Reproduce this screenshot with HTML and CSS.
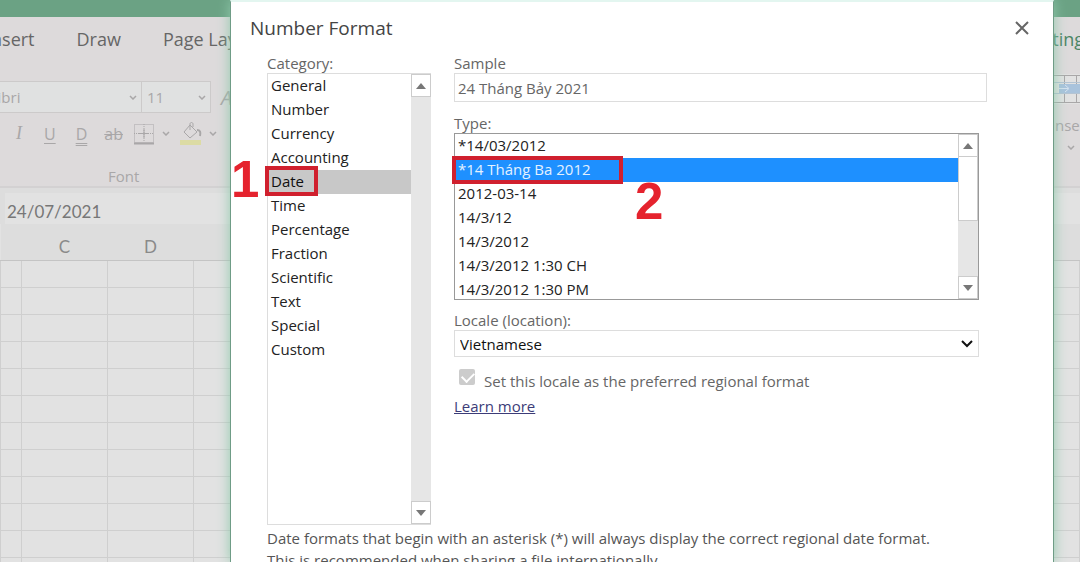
FILE: index.html
```html
<!DOCTYPE html>
<html lang="en">
<head>
    <meta charset="UTF-8">
    <title>Number Format</title>
    <meta name="viewport" content="width=device-width, initial-scale=1.0">
    <link rel="stylesheet" href="styles.css">
</head>
<body>
    <div class="workbook">
        <div class="titlebar"></div>

        <nav class="tabs">
            <button class="tab">Insert</button>
            <button class="tab">Draw</button>
            <button class="tab">Page Layout</button>
            <button class="tab mode">Editing</button>
        </nav>

        <div class="ribbon">
            <div class="group font-group">
                <div class="font-row">
                    <div class="picker font-name">
                        <select aria-label="Font"><option>Calibri</option></select>
                        <svg class="chevron" viewBox="0 0 8 5"><path d="M1 1l3 3 3-3"/></svg>
                    </div>
                    <div class="picker font-size">
                        <select aria-label="Font size"><option>11</option></select>
                        <svg class="chevron" viewBox="0 0 8 5"><path d="M1 1l3 3 3-3"/></svg>
                    </div>
                    <button class="tool grow">A</button>
                </div>
                <div class="tool-row">
                    <button class="tool italic">I</button>
                    <button class="tool underline">U</button>
                    <button class="tool double">D</button>
                    <button class="tool strike">ab</button>
                    <button class="tool with-menu" aria-label="Borders">
                        <svg width="22" height="22" viewBox="0 0 22 22">
                            <path d="M1.500 1.500h19v18h-19zM11 1v18M1 10.500h20" stroke-dasharray="1 1"/>
                            <path d="M11 6v9M6 10.500h10"/>
                            <path d="M1 20.500h20" stroke-width="2"/>
                        </svg>
                        <svg class="chevron" viewBox="0 0 8 5"><path d="M1 1l3 3 3-3"/></svg>
                    </button>
                    <button class="tool with-menu" aria-label="Fill color">
                        <svg width="22" height="24" viewBox="0 0 22 24">
                            <rect class="swatch" x="0" y="18" width="21" height="5"/>
                            <path d="M10 3l7 7-7 6-6-6zM10 8V2c0-2 3-2 3 0v3"/>
                            <path d="M17 8c3 0 4 2 3 6" stroke-width="2"/>
                        </svg>
                        <svg class="chevron" viewBox="0 0 8 5"><path d="M1 1l3 3 3-3"/></svg>
                    </button>
                </div>
                <span class="group-name">Font</span>
            </div>
            <button class="group cells-group">
                <svg width="50" height="31" viewBox="0 0 50 31">
                    <rect class="paper" x="0" y="0" width="50" height="30"/>
                    <path d="M0 1.500h50M0 28.500h50M18.500 1v28M30.500 1v28M42.500 1v28"/>
                    <rect class="cell" x="13" y="10" width="37" height="9"/>
                    <path class="edge" d="M0 8.500h50M0 19.500h50"/>
                    <path class="arrow" d="M13 14.500h9M19 11l4 3.500-4 3.500"/>
                </svg>
                <span>Insert</span>
                <svg class="chevron" viewBox="0 0 8 5"><path d="M1 1l3 3 3-3"/></svg>
            </button>
        </div>

        <div class="formula-bar">
            <input type="text" value="24/07/2021" aria-label="Formula bar">
        </div>

        <table class="sheet">
            <thead>
                <tr><th class="edge-col"></th><th>C</th><th>D</th><th class="rest"></th></tr>
            </thead>
            <tbody>
                <tr><td></td><td></td><td></td><td></td></tr>
                <tr><td></td><td></td><td></td><td></td></tr>
                <tr><td></td><td></td><td></td><td></td></tr>
                <tr><td></td><td></td><td></td><td></td></tr>
                <tr><td></td><td></td><td></td><td></td></tr>
                <tr><td></td><td></td><td></td><td></td></tr>
                <tr><td></td><td></td><td></td><td></td></tr>
                <tr><td></td><td></td><td></td><td></td></tr>
                <tr><td></td><td></td><td></td><td></td></tr>
                <tr><td></td><td></td><td></td><td></td></tr>
                <tr><td></td><td></td><td></td><td></td></tr>
                <tr><td></td><td></td><td></td><td></td></tr>
            </tbody>
        </table>
    </div>

    <div class="dialog" role="dialog" aria-labelledby="dialog-title">
        <header class="dialog-header">
            <h1 id="dialog-title">Number Format</h1>
            <button class="close" aria-label="Close">
                <svg width="14" height="14" viewBox="0 0 14 14"><path d="M1 1l12 12M13 1L1 13"/></svg>
            </button>
        </header>

        <div class="dialog-body">
            <div class="column">
                <label for="category">Category:</label>
                <div class="listbox category-box">
                    <select id="category" size="12">
                        <option>General</option>
                        <option>Number</option>
                        <option>Currency</option>
                        <option>Accounting</option>
                        <option selected>Date</option>
                        <option>Time</option>
                        <option>Percentage</option>
                        <option>Fraction</option>
                        <option>Scientific</option>
                        <option>Text</option>
                        <option>Special</option>
                        <option>Custom</option>
                    </select>
                    <div class="scrollbar">
                        <button class="arrow-btn" aria-label="Scroll up"><svg viewBox="0 0 10 6"><path d="M0 6l5-6 5 6z"/></svg></button>
                        <div class="track"></div>
                        <button class="arrow-btn" aria-label="Scroll down"><svg viewBox="0 0 10 6"><path d="M0 0l5 6 5-6z"/></svg></button>
                    </div>
                </div>
            </div>

            <div class="column options">
                <label for="sample">Sample</label>
                <input id="sample" class="sample" type="text" value="24 Tháng Bảy 2021" readonly>

                <label for="type">Type:</label>
                <div class="listbox type-box">
                    <select id="type" size="7">
                        <option>*14/03/2012</option>
                        <option selected>*14 Tháng Ba 2012</option>
                        <option>2012-03-14</option>
                        <option>14/3/12</option>
                        <option>14/3/2012</option>
                        <option>14/3/2012 1:30 CH</option>
                        <option>14/3/2012 1:30 PM</option>
                    </select>
                    <div class="scrollbar">
                        <button class="arrow-btn" aria-label="Scroll up"><svg viewBox="0 0 10 6"><path d="M0 6l5-6 5 6z"/></svg></button>
                        <div class="track"><div class="thumb"></div></div>
                        <button class="arrow-btn" aria-label="Scroll down"><svg viewBox="0 0 10 6"><path d="M0 0l5 6 5-6z"/></svg></button>
                    </div>
                </div>

                <label for="locale">Locale (location):</label>
                <div class="picker locale">
                    <select id="locale"><option>Vietnamese</option></select>
                    <svg class="chevron" viewBox="0 0 12 8"><path d="M1 1l5 5 5-5"/></svg>
                </div>

                <div class="preferred">
                    <input id="preferred" type="checkbox" checked disabled>
                    <label for="preferred">Set this locale as the preferred regional format</label>
                </div>
                <a class="learn" href="#">Learn more</a>
            </div>
        </div>

        <p class="note">Date formats that begin with an asterisk (*) will always display the correct regional date format.<br>This is recommended when sharing a file internationally.</p>

        <!-- step markers -->
        <div class="marker marker-date"></div>
        <div class="marker marker-type"></div>
        <span class="step step-one">1</span>
        <span class="step step-two">2</span>
    </div>
</body>
</html>
```
FILE: styles.css
```css
* {
    box-sizing: border-box;
}

body {
    margin: 0;
    height: 100vh;
    overflow: hidden;
    position: relative;
    background: #e2e2e2;
    font-family: "Open Sans", "Noto Sans", sans-serif;
    font-size: 15px;
    color: #222;
}

button,
input,
select {
    margin: 0;
    padding: 0;
    border: none;
    border-radius: 0;
    outline: none;
    background: none;
    font: inherit;
    color: inherit;
    appearance: none;
}

svg {
    display: block;
    fill: none;
    stroke: currentColor;
}

.chevron {
    width: 8px;
    height: 5px;
    stroke-width: 1.5;
}

/* workbook */
.workbook {
    overflow: hidden;
}

.titlebar {
    height: 17px;
    background: #6ba284;
}

.tabs {
    display: flex;
    gap: 42px;
    height: 43px;
    margin: 0 -4px 0 -14px;
    background: #dddadb;
    font-size: 18px;
    color: #666;
}

.mode {
    margin-left: auto;
    color: #4b8565;
}

.ribbon {
    display: flex;
    justify-content: space-between;
    height: 128px;
    padding-top: 14px;
    background: #dddadb;
    border-bottom: 2px solid #d3d1d2;
    color: #a9a7a8;
}

.group {
    display: flex;
    flex-direction: column;
}

.font-row {
    display: flex;
    margin: 7px 0 0 -30px;
}

.picker {
    position: relative;
    display: flex;
}

.picker select {
    width: 100%;
    padding: 0 5px;
}

.picker .chevron {
    position: absolute;
    right: 4px;
    top: 50%;
    margin-top: -2px;
    pointer-events: none;
}

.font-name,
.font-size {
    height: 32px;
    background: #e0e1e1;
    border: 1px solid #cccaca;
}

.font-name {
    width: 172px;
}

.font-size {
    width: 69px;
    border-left: none;
}

.grow {
    margin-left: 10px;
    font-size: 20px;
    font-style: italic;
}

.tool-row {
    display: flex;
    align-items: center;
    gap: 20px;
    height: 42px;
    padding-left: 14px;
    font-size: 16px;
}

.italic {
    width: 10px;
    font-family: "Liberation Serif", serif;
    font-size: 18px;
    font-style: italic;
}

.underline {
    text-decoration: underline;
    text-underline-offset: 3px;
}

.double {
    text-decoration: underline double;
    text-underline-offset: 3px;
}

.strike {
    margin: 0 -10px 0 -3px;
    text-decoration: line-through;
}

.with-menu {
    display: flex;
    align-items: center;
    gap: 7px;
    margin-right: -10px;
}

.swatch {
    fill: #dcdba4;
    stroke: none;
}

.group-name {
    margin-top: 12px;
    padding-left: 108px;
}

.cells-group {
    align-items: center;
    gap: 10px;
    margin-right: -16px;
    font-size: 15px;
}

.paper {
    fill: #e2e2e2;
    stroke: none;
}

.cell {
    fill: #a9c3dc;
    stroke: none;
}

.edge {
    stroke: #b4c4d3;
}

.arrow {
    stroke: #d5e3f0;
}

.formula-bar {
    height: 36px;
    padding: 5px 0 0 5px;
    background: #dddddd;
}

.formula-bar input {
    width: 100%;
    height: 31px;
    padding: 5px 2px 0;
    background: #e2e2e2;
    font-family: Lato, sans-serif;
    font-size: 17px;
    color: #777;
}

.sheet {
    width: 100%;
    table-layout: fixed;
    border-collapse: collapse;
    background: #e2e2e2;
}

.sheet th {
    width: 86px;
    height: 36px;
    padding: 10px 0 0;
    background: #dddddd;
    border-bottom: 1px solid #c4c4c4;
    font-family: Lato, sans-serif;
    font-size: 17px;
    font-weight: normal;
    color: #8a8a8a;
}

.sheet .edge-col {
    width: 21px;
}

.sheet .rest {
    width: auto;
}

.sheet td {
    height: 27px;
    padding: 0;
    border: 1px solid #cfcfcf;
}

/* dialog */
.dialog {
    position: absolute;
    top: 0;
    bottom: 0;
    left: 230px;
    right: 26px;
    padding: 0 36px;
    background: #fff;
    border: 1px solid #6f9c86;
    border-top: 2px solid #e3f6f0;
    border-bottom: none;
    box-shadow: 0 0 12px #8fc9ab;
}

.dialog-header {
    display: flex;
    justify-content: space-between;
    align-items: center;
    height: 51px;
    margin: 0 -18px 0 -17px;
}

h1 {
    margin: 0;
    font-size: 19px;
    font-weight: normal;
    color: #444;
}

.close {
    padding: 6px;
    color: #666;
}

.close svg {
    stroke-width: 2;
}

.dialog-body {
    display: flex;
    gap: 23px;
}

.column {
    display: flex;
    flex-direction: column;
}

.options {
    flex: 1;
    padding-right: 38px;
}

.column label {
    line-height: 20px;
    color: #666;
}

.listbox {
    display: flex;
    background: #fff;
    color: #222;
}

.listbox select {
    flex: 1;
    overflow: hidden;
}

.listbox option {
    min-height: 24px;
    padding: 1px 3px 0;
    line-height: 23px;
}

.category-box {
    width: 164px;
    height: 452px;
    border: 1px solid #ddd;
    border-right: none;
}

.category-box option:checked {
    background: linear-gradient(#c8c8c8, #c8c8c8);
}

.scrollbar {
    display: flex;
    flex-direction: column;
    width: 20px;
    background: #e6e6e6;
}

.arrow-btn {
    display: flex;
    justify-content: center;
    align-items: center;
    height: 23px;
    background: #fff;
    border: 1px solid #ccc;
}

.arrow-btn svg {
    width: 10px;
    height: 6px;
    fill: #777;
    stroke: none;
}

.track {
    flex: 1;
}

.thumb {
    height: 64px;
    background: #fff;
    border: 1px solid #ccc;
    border-top: none;
}

.sample {
    height: 29px;
    margin: 0 -8px 11px 0;
    padding: 1px 3px 0;
    border: 1px solid #ddd;
    color: #666;
}

.type-box {
    height: 167px;
    margin-bottom: 10px;
    border: 1px solid #999;
}

.type-box option:checked {
    background: linear-gradient(#1e90ff, #1e90ff);
    -webkit-text-fill-color: #e4f1ff;
}

.locale {
    height: 27px;
    border: 1px solid #ddd;
    color: #111;
}

.picker.locale .chevron {
    right: 5px;
    width: 12px;
    height: 8px;
    margin-top: -4px;
    stroke-width: 2;
}

.preferred {
    display: flex;
    gap: 9px;
    margin: 12px 0 0 5px;
}

.preferred input {
    width: 16px;
    height: 16px;
    background: #ccc;
    border-radius: 2px;
}

.preferred input::after {
    content: "";
    display: block;
    width: 6px;
    height: 10px;
    margin: 1px 0 0 5px;
    border: solid #fff;
    border-width: 0 2px 2px 0;
    transform: rotate(45deg);
}

.preferred label {
    padding-top: 2px;
}

.learn {
    align-self: flex-start;
    margin-top: 5px;
    color: #3c3c78;
}

.note {
    margin: 2px 0 0;
    line-height: 22px;
    color: #555;
}

.marker {
    position: absolute;
    border: 4px solid #d0202e;
    pointer-events: none;
}

.marker-date {
    top: 164px;
    left: 34px;
    width: 53px;
    height: 30px;
}

.marker-type {
    top: 154px;
    left: 221px;
    width: 171px;
    height: 28px;
}

.step {
    position: absolute;
    font-family: "Liberation Sans", Arial, sans-serif;
    font-size: 51px;
    font-weight: bold;
    line-height: 56px;
    color: #e5232e;
}

.step-one {
    top: 150px;
    left: 0;
}

.step-two {
    top: 172px;
    left: 404px;
}
```
